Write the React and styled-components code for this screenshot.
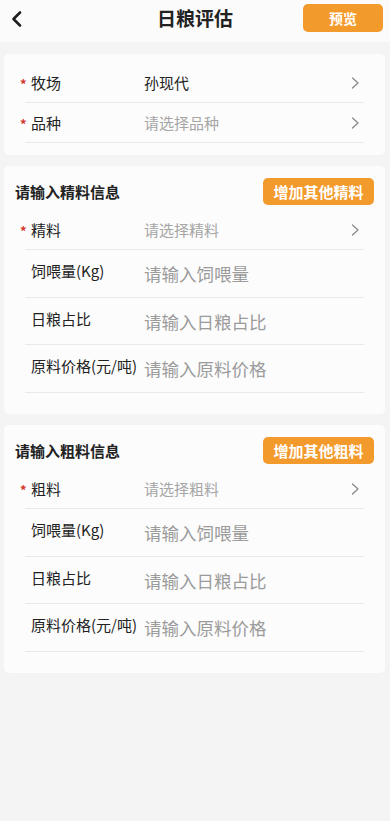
import React from "react";
import styled, { createGlobalStyle } from "styled-components";

const GlobalStyle = createGlobalStyle`
    * { box-sizing: border-box; }
    body {
        margin: 0;
        background: #f4f4f4;
        font-family: "Noto Sans CJK SC", "Noto Sans", sans-serif;
        color: #222;
    }
`;

const Page = styled.div`
    min-height: 821px;
    background: #f4f4f4;
    padding-bottom: 20px;
`;

const Header = styled.div`
    height: 42px;
    background: #fbfbfb;
    display: grid;
    grid-template-columns: 1fr auto 1fr;
    align-items: center;
`;

const BackButton = styled.div`
    padding-left: 10px;
    display: flex;
    align-items: center;
    transform: translateY(-2px);
`;

const Title = styled.h1`
    margin: 0;
    font-size: 19px;
    font-weight: 700;
    color: #222;
    line-height: 1;
    transform: translateY(-4px);
`;

const HeaderRight = styled.div`
    display: flex;
    justify-content: flex-end;
    padding-right: 7px;
    align-self: start;
    padding-top: 4px;
`;

const OrangeButton = styled.button`
    border: none;
    background: #f39a2c;
    color: #fff;
    font-family: inherit;
    font-weight: 700;
    font-size: ${p => p.$size || 15}px;
    border-radius: 5px;
    height: ${p => p.$height || 27}px;
    width: ${p => p.$width}px;
    padding: 0;
    line-height: 1;
    cursor: pointer;
`;

const Card = styled.div`
    margin: ${p => p.$top}px 5px 0 4px;
    background: #fcfcfc;
    border-radius: 5px;
    padding: ${p => p.$padTop}px 21px ${p => p.$padBottom}px;
`;

const SectionHead = styled.div`
    display: flex;
    justify-content: space-between;
    align-items: center;
    margin: 0 -10px 5px;
    height: 27px;
`;

const SectionTitle = styled.h2`
    margin: 0;
    font-size: 15px;
    font-weight: 700;
    color: #222;
`;

const Row = styled.div`
    display: flex;
    align-items: center;
    height: ${p => p.$height}px;
    border-bottom: 1px solid #e9e9e9;
`;

const Label = styled.div`
    width: 119px;
    flex-shrink: 0;
    display: flex;
    align-items: center;
    font-size: 15px;
    color: #222;
    white-space: nowrap;
    margin-top: ${p => (p.$raised ? -6 : 0)}px;
`;

const Star = styled.span`
    width: 5px;
    margin-left: -5px;
    margin-right: 6px;
    color: #d4382c;
    font-size: 13px;
    font-weight: 700;
    line-height: 1;
    transform: translateY(1px);
    text-align: center;
`;

const Indent = styled.span`
    width: 6px;
`;

const Value = styled.div`
    flex: 1;
    font-size: ${p => (p.$large ? 17.5 : 15)}px;
    color: ${p => (p.$placeholder ? (p.$large ? "#9b9b9b" : "#a5a5a5") : "#222")};
    white-space: nowrap;
`;

const Chevron = styled.svg`
    width: 9px;
    height: 12px;
    margin-right: 4px;
    flex-shrink: 0;
`;

const Arrow = () => (
    <Chevron viewBox="0 0 9 12">
        <polyline points="1.5,1 7,6 1.5,11" fill="none" stroke="#8a8a8a" strokeWidth="1.3" strokeLinecap="round" strokeLinejoin="round" />
    </Chevron>
);

const SelectRow = ({ label, value, placeholder }) => (
    <Row $height={40}>
        <Label>
            <Star>*</Star>
            {label}
        </Label>
        <Value $placeholder={!value}>{value || placeholder}</Value>
        <Arrow />
    </Row>
);

const InputRow = ({ label, placeholder, height }) => (
    <Row $height={height}>
        <Label $raised>
            <Indent />
            {label}
        </Label>
        <Value $large $placeholder>{placeholder}</Value>
    </Row>
);

const FeedSection = ({ title, button, name, top }) => (
    <Card $top={top} $padTop={12} $padBottom={21}>
        <SectionHead>
            <SectionTitle>{title}</SectionTitle>
            <OrangeButton $width={111}>{button}</OrangeButton>
        </SectionHead>
        <SelectRow label={name} placeholder={"请选择" + name} />
        <InputRow label="饲喂量(Kg)" placeholder="请输入饲喂量" height={48} />
        <InputRow label="日粮占比" placeholder="请输入日粮占比" height={47} />
        <InputRow label="原料价格(元/吨)" placeholder="请输入原料价格" height={48} />
    </Card>
);

const App = () => {
    return (
        <Page>
            <GlobalStyle />
            <Header>
                <BackButton>
                    <svg width="14" height="18" viewBox="0 0 14 18">
                        <polyline points="10,2.5 3.5,9 10,15.5" fill="none" stroke="#1e1e1e" strokeWidth="2.6" strokeLinecap="round" strokeLinejoin="round" />
                    </svg>
                </BackButton>
                <Title>日粮评估</Title>
                <HeaderRight>
                    <OrangeButton $width={80} $height={28} $size={14}>预览</OrangeButton>
                </HeaderRight>
            </Header>
            <Card $top={12} $padTop={9} $padBottom={12}>
                <SelectRow label="牧场" value="孙现代" />
                <SelectRow label="品种" placeholder="请选择品种" />
            </Card>
            <FeedSection top={11} title="请输入精料信息" button="增加其他精料" name="精料" />
            <FeedSection top={11} title="请输入粗料信息" button="增加其他粗料" name="粗料" />
        </Page>
    );
};

export default App;
